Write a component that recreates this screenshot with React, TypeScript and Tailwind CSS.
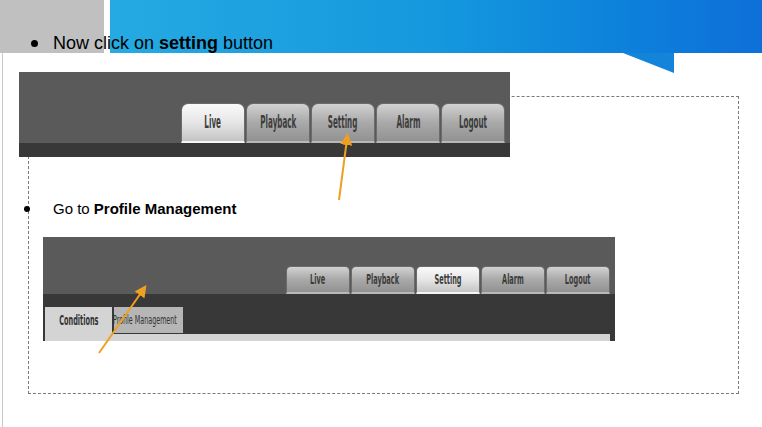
const tabs = ["Live", "Playback", "Setting", "Alarm", "Logout"];

const Tab = ({ label, active, big }: { label: string; active: boolean; big: boolean }) => {
  const look = active
    ? "bg-gradient-to-b from-[#fafafa] via-[#e6e6e6] to-[#c4c4c4] border-b-2 border-b-[#f4f4f4]"
    : "bg-gradient-to-b from-[#d2d2d2] via-[#a9a9a9] to-[#929292] border-b-2 border-b-[#b8b8b8]";
  return (
    <div
      className={`${big ? "h-[40px] rounded-t-[7px]" : "h-[28px] rounded-t-[5px]"} w-[64px] flex items-center justify-center border border-[#6b6b6b] ${look}`}
    >
      <span
        className={`${big ? "text-[17px] scale-x-[0.47]" : "text-[14px] scale-x-[0.52]"} font-bold text-[#3c3c3c] whitespace-nowrap`}
        style={{ fontFamily: '"DejaVu Sans Condensed", "DejaVu Sans", sans-serif' }}
      >
        {label}
      </span>
    </div>
  );
};

const Screenshot1 = () => (
  <div className="w-[491px] h-[85px] flex flex-col">
    <div className="h-[71px] bg-[#5a5a5a] flex items-end justify-end gap-[1px] pr-[5px]">
      {tabs.map((t) => (
        <Tab key={t} label={t} active={t === "Live"} big />
      ))}
    </div>
    <div className="h-[14px] bg-[#383838]" />
  </div>
);

const Screenshot2 = () => (
  <div className="w-[572px] h-[104px] flex flex-col ml-[24px] mt-[19px]">
    <div className="h-[57px] bg-[#5a5a5a] flex items-end justify-end gap-[1px] pr-[5px]">
      {tabs.map((t) => (
        <Tab key={t} label={t} active={t === "Setting"} big={false} />
      ))}
    </div>
    <div className="h-[47px] bg-[#383838] flex flex-col pt-[13px] pl-[2px] pr-[5px]">
      <div className="flex items-start gap-[2px] h-[27px]">
        <div className="w-[67px] h-[27px] bg-[#d4d4d4] flex items-center justify-center">
          <span
            className="text-[14px] font-bold text-[#333] scale-x-[0.52] whitespace-nowrap"
            style={{ fontFamily: '"DejaVu Sans Condensed", "DejaVu Sans", sans-serif' }}
          >
            Conditions
          </span>
        </div>
        <div className="w-[69px] h-[26px] bg-[#b6b6b6] flex items-center">
          <span
            className="text-[13px] text-[#333] whitespace-nowrap origin-left scale-x-[0.545] -ml-[1px]"
            style={{ fontFamily: '"DejaVu Sans Condensed", "DejaVu Sans", sans-serif' }}
          >
            Profile Management
          </span>
        </div>
      </div>
      <div className="h-[7px] bg-[#d4d4d4]" />
    </div>
  </div>
);

export default function App() {
  return (
    <div
      className="relative w-[762px] h-[427px] overflow-hidden bg-white text-black"
      style={{ fontFamily: '"Liberation Sans", Arial, sans-serif' }}
    >
      {/* banner */}
      <div className="relative flex h-[53px]">
        <div className="w-[104px] bg-[#c0c0c0]" />
        <div className="w-[6px] bg-white" />
        <div className="flex-1 bg-gradient-to-r from-[#25aae2] via-[#1598dd] to-[#0e6fd9]" />
        <svg className="absolute left-0 top-[53px]" width="762" height="21">
          <polygon points="623,0 674,0 674,20" fill="#1484db" />
        </svg>
        <div className="absolute left-0 top-[33px] flex items-center h-[20px] text-[18px] leading-[20px]">
          <span className="ml-[31px] w-[7px] h-[7px] rounded-full bg-black" />
          <span className="ml-[15px]">
            Now click on <b>setting</b> button
          </span>
        </div>
      </div>

      {/* slide body */}
      <div className="relative h-[374px] ml-[2px] border-l border-[#c9c9c9]">
        <div className="absolute left-[25px] top-[43px] w-[711px] h-[298px] border border-dashed border-[#7a7a7a]" />
        <div className="relative flex flex-col pl-[16px] pt-[19px]">
          <Screenshot1 />
          <div className="flex items-center h-[18px] mt-[43px] text-[15px] leading-[18px]">
            <span className="ml-[5px] w-[6px] h-[6px] rounded-full bg-black" />
            <span className="ml-[23px]">
              Go to <b>Profile Management</b>
            </span>
          </div>
          <Screenshot2 />
        </div>
      </div>

      {/* arrows */}
      <svg className="absolute left-0 top-0 pointer-events-none" width="762" height="427">
        <defs>
          <marker id="head" markerWidth="6" markerHeight="6" refX="3" refY="3" orient="auto">
            <path d="M0,0 L6,3 L0,6 Z" fill="#f0a020" />
          </marker>
        </defs>
        <line x1="339" y1="200" x2="347" y2="139" stroke="#f0a020" strokeWidth="2" markerEnd="url(#head)" />
        <line x1="99" y1="353" x2="143" y2="290" stroke="#f0a020" strokeWidth="2" markerEnd="url(#head)" />
      </svg>
    </div>
  );
}
